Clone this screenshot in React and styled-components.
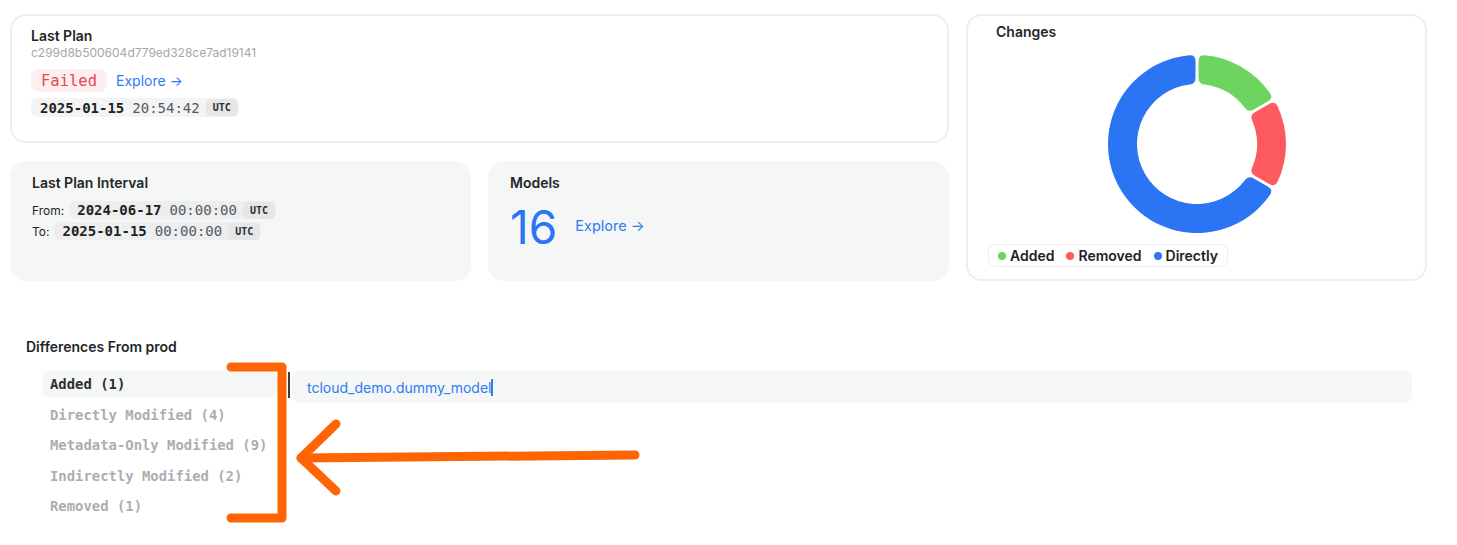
import styled, { createGlobalStyle } from 'styled-components';

const GlobalStyle = createGlobalStyle`
  body {
    margin: 0;
    background: #fff;
    font-family: Inter, "Noto Sans", sans-serif;
    color: #1f2328;
  }
`;

const MONO = '"DejaVu Sans Mono", "Liberation Mono", monospace';

const Page = styled.div`
    position: relative;
    width: 1457px;
    height: 545px;
    box-sizing: border-box;
    padding: 14px 30px 0 10px;
    overflow: hidden;
`;

const Overview = styled.div`
    display: grid;
    grid-template-columns: repeat(3, 1fr);
    grid-template-rows: 129px 120px;
    gap: 18px 17px;
`;

const Card = styled.section`
    box-sizing: border-box;
    border-radius: 16px;
    grid-column: ${p => p.$col || 'auto'};
    grid-row: ${p => p.$row || 'auto'};
    padding: ${p => p.$pad || '13px 22px'};
    background: ${p => (p.$filled ? '#f5f6f6' : '#fff')};
    border: ${p => (p.$filled ? 'none' : '2px solid #eeeeee')};
    display: flex;
    flex-direction: column;
`;

const CardTitle = styled.h3`
    margin: 0;
    font-size: 14px;
    line-height: 18px;
    font-weight: 600;
    color: #232629;
    padding-left: ${p => p.$indent || 0}px;
`;

const Hash = styled.div`
    font-size: 12px;
    line-height: 16px;
    color: #a3a7ab;
`;

const StatusRow = styled.div`
    display: flex;
    align-items: center;
    gap: 9px;
    margin-top: 8px;
`;

const FailedBadge = styled.span`
    display: inline-flex;
    align-items: center;
    height: 23px;
    padding: 0 10px;
    border-radius: 8px;
    background: #fdeff0;
    color: #e5484d;
    font-family: ${MONO};
    font-size: 15.5px;
`;

const Explore = styled.a`
    color: #2f7bf5;
    font-size: ${p => p.$size || 14}px;
    text-decoration: none;
    cursor: pointer;
    margin-top: ${p => p.$lift ? `-${p.$lift}px` : 0};
`;

const DatePill = styled.span`
    display: inline-flex;
    align-items: center;
    align-self: flex-start;
    height: ${p => p.$h || 19}px;
    padding: 0 1px 0 ${p => p.$pl || 9}px;
    border-radius: 6px;
    background: ${p => (p.$filled ? '#eceeef' : '#f3f4f5')};
    font-family: ${MONO};
    font-size: 14px;
    color: #222;
    margin-top: ${p => p.$mt || 0}px;
`;

const DatePart = styled.b`
    font-weight: 700;
`;

const TimePart = styled.span`
    color: #555a5e;
    margin-left: 8px;
`;

const UtcBadge = styled.span`
    display: inline-flex;
    align-items: center;
    height: 17px;
    padding: 0 7px;
    margin-left: 6px;
    border-radius: 5px;
    background: #e4e6e8;
    font-family: ${MONO};
    font-weight: 700;
    font-size: 10px;
    color: #2a2d30;
`;

const IntervalRows = styled.div`
    display: flex;
    flex-direction: column;
    gap: 3px;
    margin-top: 9px;
`;

const IntervalRow = styled.div`
    display: flex;
    align-items: center;
    gap: 5px;
`;

const Label = styled.span`
    font-size: 12px;
    color: #232629;
`;

const ModelsRow = styled.div`
    display: flex;
    align-items: center;
    gap: 18px;
    margin-top: 12px;
`;

const BigNumber = styled.span`
    font-size: 46px;
    line-height: 46px;
    color: #2a74f5;
`;

const DonutWrap = styled.div`
    display: flex;
    justify-content: center;
    margin-top: 13px;
`;

const Legend = styled.div`
    display: inline-flex;
    align-self: flex-start;
    align-items: center;
    gap: 12px;
    height: 23px;
    box-sizing: border-box;
    margin: 10px 0 0 0;
    padding: 0 9px;
    border: 1px solid #ececec;
    border-radius: 7px;
`;

const LegendItem = styled.span`
    display: inline-flex;
    align-items: center;
    gap: 4px;
    font-size: 14px;
    font-weight: 600;
    color: #222;
`;

const Dot = styled.i`
    width: 8px;
    height: 8px;
    border-radius: 50%;
    background: ${p => p.$color};
`;

const Differences = styled.div`
    margin-top: 57px;
    padding: 0 15px 0 16px;
`;

const DiffBody = styled.div`
    display: flex;
    align-items: flex-start;
    margin: 15px 0 0 16px;
`;

const TypeList = styled.ul`
    list-style: none;
    margin: 0;
    padding: 0;
    width: 235px;
    display: flex;
    flex-direction: column;
    gap: 4.5px;
`;

const TypeItem = styled.li`
    display: flex;
    align-items: center;
    height: 26px;
    padding: 0 8px;
    border-radius: 6px;
    font-family: ${MONO};
    font-size: 13.9px;
    font-weight: 700;
    color: ${p => (p.$active ? '#2b2f33' : '#a9aeb3')};
    background: ${p => (p.$active ? '#f5f6f6' : 'transparent')};
`;

const Divider = styled.div`
    width: 2px;
    height: 26px;
    margin: 1px 2px 0 11px;
    background: #3a3d40;
`;

const ModelPanel = styled.div`
    flex: 1;
    display: flex;
    align-items: center;
    height: 32px;
    padding: 0 15px;
    border-radius: 8px;
    background: #f5f6f6;
`;

const ModelName = styled.span`
    font-size: 14px;
    color: #2f7bf5;
`;

const Caret = styled.i`
    display: inline-block;
    width: 1.5px;
    height: 17px;
    background: #2f7bf5;
`;

const Overlay = styled.svg`
    position: absolute;
    left: 0;
    top: 0;
    pointer-events: none;
`;

const CX = 90;
const CY = 90;

const polar = (r, deg) => {
    const a = ((deg - 90) * Math.PI) / 180;
    return [CX + r * Math.cos(a), CY + r * Math.sin(a)];
};

// annular sector with rounded corners and a parallel gap between segments
function sectorPath(a0, a1, R, r, c, gap) {
    const rad = 180 / Math.PI;
    const s = rr => a0 + Math.asin(gap / 2 / rr) * rad;
    const e = rr => a1 - Math.asin(gap / 2 / rr) * rad;
    const p = pt => pt.map(v => v.toFixed(2)).join(' ');
    const oa0 = s(R) + (c / R) * rad;
    const oa1 = e(R) - (c / R) * rad;
    const ia0 = s(r) + (c / r) * rad;
    const ia1 = e(r) - (c / r) * rad;
    return [
        `M ${p(polar(R - c, s(R - c)))}`,
        `Q ${p(polar(R, s(R)))} ${p(polar(R, oa0))}`,
        `A ${R} ${R} 0 ${oa1 - oa0 > 180 ? 1 : 0} 1 ${p(polar(R, oa1))}`,
        `Q ${p(polar(R, e(R)))} ${p(polar(R - c, e(R - c)))}`,
        `L ${p(polar(r + c, e(r + c)))}`,
        `Q ${p(polar(r, e(r)))} ${p(polar(r, ia1))}`,
        `A ${r} ${r} 0 ${ia1 - ia0 > 180 ? 1 : 0} 0 ${p(polar(r, ia0))}`,
        `Q ${p(polar(r, s(r)))} ${p(polar(r + c, s(r + c)))}`,
        'Z',
    ].join(' ');
}

const changes = [
    {label: 'Added', value: 1, color: '#6bd55f'},
    {label: 'Removed', value: 1, color: '#fc5a60'},
    {label: 'Directly', value: 4, color: '#2b74f3'},
];

const changeTypes = [
    'Added (1)',
    'Directly Modified (4)',
    'Metadata-Only Modified (9)',
    'Indirectly Modified (2)',
    'Removed (1)',
];

const Donut = () => {
    const total = changes.reduce((sum, c) => sum + c.value, 0);
    let start = 0;
    return (
        <svg width="180" height="180" viewBox="0 0 180 180">
            {changes.map(c => {
                const end = start + (c.value / total) * 360;
                const d = sectorPath(start, end, 89, 60, 6, 3);
                start = end;
                return <path key={c.label} d={d} fill={c.color} />;
            })}
        </svg>
    );
};

const Timestamp = ({date, time, mt, pl, h, filled}) => (
    <DatePill $mt={mt} $pl={pl} $h={h} $filled={filled}>
        <DatePart>{date}</DatePart>
        <TimePart>{time}</TimePart>
        <UtcBadge>UTC</UtcBadge>
    </DatePill>
);

export default function App() {
    return (
        <Page>
            <GlobalStyle />
            <Overview>
                <Card $col="1 / span 2" $row="1" $pad="11px 19px">
                    <CardTitle>Last Plan</CardTitle>
                    <Hash>c299d8b500604d779ed328ce7ad19141</Hash>
                    <StatusRow>
                        <FailedBadge>Failed</FailedBadge>
                        <Explore>Explore →</Explore>
                    </StatusRow>
                    <Timestamp date="2025-01-15" time="20:54:42" mt={6} />
                </Card>

                <Card $col="3" $row="1 / span 2" $pad="7px 20px 0">
                    <CardTitle $indent={8}>Changes</CardTitle>
                    <DonutWrap>
                        <Donut />
                    </DonutWrap>
                    <Legend>
                        {changes.map(c => (
                            <LegendItem key={c.label}>
                                <Dot $color={c.color} />
                                {c.label}
                            </LegendItem>
                        ))}
                    </Legend>
                </Card>

                <Card $filled $col="1" $row="2">
                    <CardTitle>Last Plan Interval</CardTitle>
                    <IntervalRows>
                        <IntervalRow>
                            <Label>From:</Label>
                            <Timestamp date="2024-06-17" time="00:00:00" pl={8} h={18} filled />
                        </IntervalRow>
                        <IntervalRow>
                            <Label>To:</Label>
                            <Timestamp date="2025-01-15" time="00:00:00" pl={8} h={18} filled />
                        </IntervalRow>
                    </IntervalRows>
                </Card>

                <Card $filled $col="2" $row="2">
                    <CardTitle>Models</CardTitle>
                    <ModelsRow>
                        <BigNumber>16</BigNumber>
                        <Explore $size={14.5} $lift={3}>Explore →</Explore>
                    </ModelsRow>
                </Card>
            </Overview>

            <Differences>
                <CardTitle>Differences From prod</CardTitle>
                <DiffBody>
                    <TypeList>
                        {changeTypes.map((t, i) => (
                            <TypeItem key={t} $active={i === 0}>{t}</TypeItem>
                        ))}
                    </TypeList>
                    <Divider />
                    <ModelPanel>
                        <ModelName>tcloud_demo.dummy_model</ModelName>
                        <Caret />
                    </ModelPanel>
                </DiffBody>
            </Differences>

            <Overlay width="1457" height="545" viewBox="0 0 1457 545">
                <g fill="none" stroke="#ff6505" strokeWidth="9" strokeLinecap="round" strokeLinejoin="round">
                    <path d="M231 367 H282 V518 H231" />
                    <path d="M635 455 L301 458" />
                    <path d="M336 424 L301 458 L336 491" />
                </g>
            </Overlay>
        </Page>
    );
}
